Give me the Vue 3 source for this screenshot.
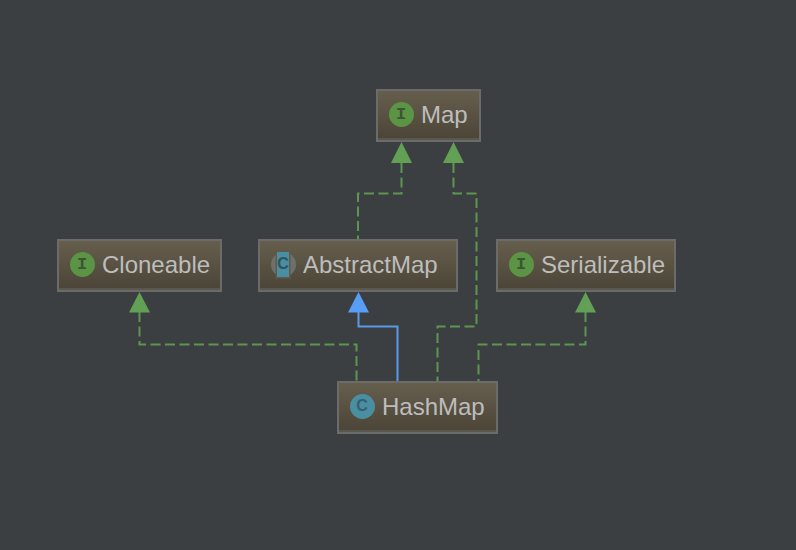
<script setup>
const nodes = [
  { name: 'Map', kind: 'i', left: 376, top: 89, width: 105 },
  { name: 'Cloneable', kind: 'i', left: 57, top: 239, width: 165 },
  { name: 'AbstractMap', kind: 'a', left: 258, top: 239, width: 200 },
  { name: 'Serializable', kind: 'i', left: 496, top: 239, width: 180 },
  { name: 'HashMap', kind: 'c', left: 337, top: 381, width: 161 }
]
const letters = { i: 'I', a: 'C', c: 'C' }
const green = [
  '401.5,163 401.5,193.5 358,193.5 358,239',
  '453.5,163 453.5,193.5 476.5,193.5 476.5,326.5 437.5,326.5 437.5,381',
  '139.5,312 139.5,344.5 356.5,344.5 356.5,381',
  '585.5,312 585.5,344.5 478.5,344.5 478.5,381'
]
const greenHeads = [
  '401.5,142 391,163 412,163',
  '453.5,142 443,163 464,163',
  '139.5,292 129,312.5 150,312.5',
  '585.5,292 575,312.5 596,312.5'
]
</script>

<template>
  <div class="canvas">
    <svg class="edges" width="796" height="550" viewBox="0 0 796 550">
      <polyline v-for="p in green" :key="p" class="dash" :points="p" />
      <polygon v-for="p in greenHeads" :key="p" class="head-green" :points="p" />
      <polyline class="solid" points="358.5,312 358.5,326.5 397.5,326.5 397.5,381" />
      <polygon class="head-blue" points="358.5,292 348,312.5 369,312.5" />
    </svg>
    <div
      v-for="n in nodes"
      :key="n.name"
      class="node"
      :style="{ left: n.left + 'px', top: n.top + 'px', width: n.width + 'px' }"
    >
      <span class="badge" :class="'badge-' + n.kind"><span class="letter">{{ letters[n.kind] }}</span></span>
      <span class="label">{{ n.name }}</span>
    </div>
  </div>
</template>

<style>
html, body { margin: 0; background: #3c3f41; }
</style>

<style scoped>
.canvas {
  position: relative;
  width: 796px;
  height: 550px;
  overflow: hidden;
  background: #3c3f41;
  font-family: "Liberation Sans", Arial, sans-serif;
}
.edges { position: absolute; left: 0; top: 0; }
.dash {
  fill: none;
  stroke: #5c9650;
  stroke-width: 2;
  stroke-dasharray: 10 4.5;
}
.solid { fill: none; stroke: #5a9ae8; stroke-width: 2; }
.head-green { fill: #62a055; }
.head-blue { fill: #589df6; }
.node {
  position: absolute;
  box-sizing: border-box;
  height: 53px;
  display: flex;
  align-items: center;
  gap: 7.5px;
  padding: 0 0 3px 10.5px;
  border: 2px solid #6b6b6a;
  background: linear-gradient(#665e4d, #4b4537);
  box-shadow: inset 0 -2px 0 #5a584e;
}
.badge {
  flex: none;
  width: 25px;
  height: 25px;
  border-radius: 50%;
  display: flex;
  align-items: center;
  justify-content: center;
}
.badge-i { background: #5c9445; color: #3a5632; }
.badge-c { background: #4a8ea2; color: #35606f; }
.badge-a { background: #6f706c; color: #2f5361; }
.letter {
  font-family: "Liberation Mono", monospace;
  font-weight: 700;
  font-size: 17px;
  line-height: 1;
}
.badge-c .letter,
.badge-a .letter {
  font-family: "Liberation Sans", sans-serif;
  font-size: 16px;
}
.badge-a .letter {
  width: 12px;
  height: 25px;
  display: flex;
  align-items: center;
  justify-content: center;
  background: #4a8ea2;
  box-shadow: 0 0 0 1.5px #5f5a4c;
}
.label {
  font-size: 24px;
  line-height: 28px;
  padding-top: 2px;
  color: #bdbdbd;
  white-space: nowrap;
}
</style>
